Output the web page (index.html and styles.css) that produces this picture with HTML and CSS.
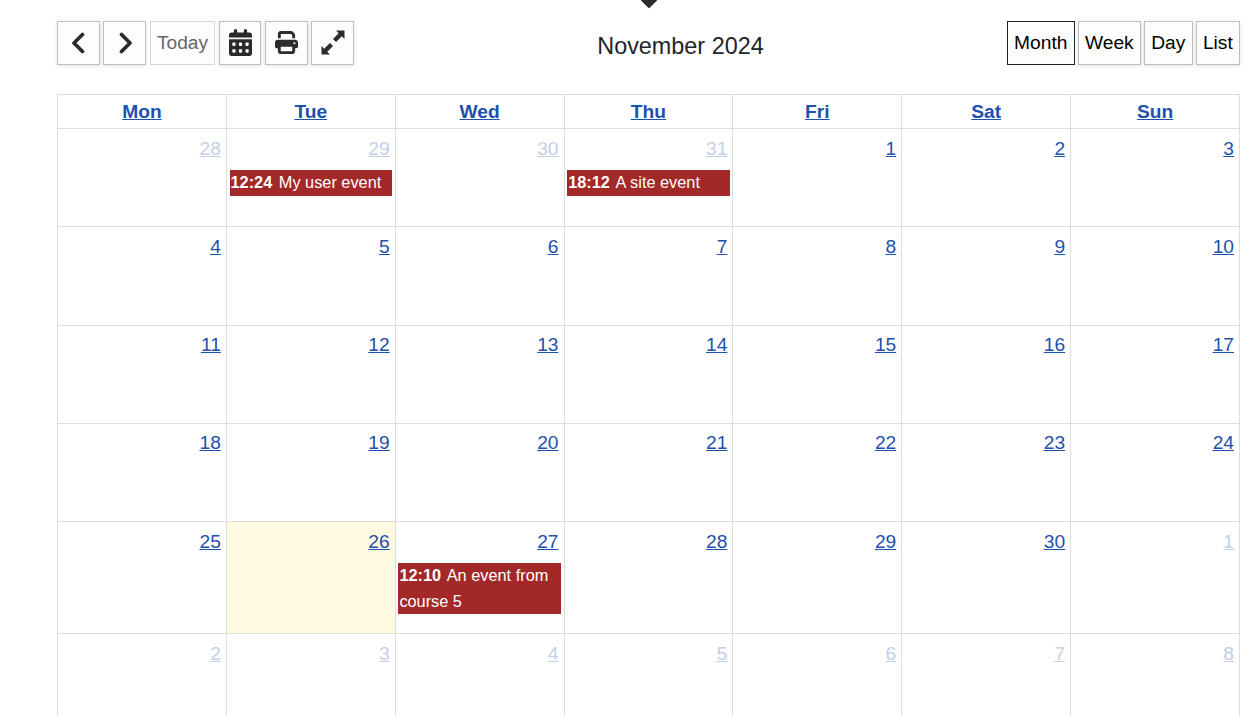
FILE: index.html
```html
<!DOCTYPE html>
<html lang="en">
<head>
<meta charset="utf-8">
<title>Calendar</title>
<link rel="stylesheet" href="styles.css">
</head>
<body>
<div class="caret"></div>
<main class="calendar">
  <header class="toolbar">
    <div class="group">
      <button class="btn icon"><svg class="chev prev" viewBox="0 0 14 22"><path d="M11.5 2.5 3 11l8.5 8.5"/></svg></button>
      <button class="btn icon"><svg class="chev next" viewBox="0 0 14 22"><path d="M2.5 2.5 11 11l-8.5 8.5"/></svg></button>
      <button class="btn today">Today</button>
      <button class="btn icon cal"><svg class="glyph calendar-glyph" viewBox="0 0 448 512" preserveAspectRatio="none"><path d="M128 0c17.7 0 32 14.3 32 32V64H288V32c0-17.7 14.3-32 32-32s32 14.3 32 32V64h48c26.5 0 48 21.5 48 48v48H0V112C0 85.5 21.5 64 48 64H96V32c0-17.7 14.3-32 32-32zM0 192H448V464c0 26.5-21.5 48-48 48H48c-26.5 0-48-21.5-48-48V192zm64 80v32c0 8.8 7.2 16 16 16h32c8.8 0 16-7.2 16-16V272c0-8.8-7.2-16-16-16H80c-8.8 0-16 7.2-16 16zm128 0v32c0 8.8 7.2 16 16 16h32c8.8 0 16-7.2 16-16V272c0-8.8-7.2-16-16-16H208c-8.8 0-16 7.2-16 16zm144-16c-8.8 0-16 7.2-16 16v32c0 8.8 7.2 16 16 16h32c8.8 0 16-7.2 16-16V272c0-8.8-7.2-16-16-16H336zM64 400v32c0 8.8 7.2 16 16 16h32c8.8 0 16-7.2 16-16V400c0-8.8-7.2-16-16-16H80c-8.8 0-16 7.2-16 16zm144-16c-8.8 0-16 7.2-16 16v32c0 8.8 7.2 16 16 16h32c8.8 0 16-7.2 16-16V400c0-8.8-7.2-16-16-16H208zm112 16v32c0 8.8 7.2 16 16 16h32c8.8 0 16-7.2 16-16V400c0-8.8-7.2-16-16-16H336c-8.8 0-16 7.2-16 16z"/></svg></button>
      <button class="btn icon print"><svg class="glyph square" viewBox="0 0 512 512"><path d="M128 0C92.7 0 64 28.7 64 64v96h64V64H354.7L384 93.3V160h64V93.3c0-17-6.7-33.3-18.7-45.3L400 18.7C388 6.7 371.7 0 354.7 0H128zM384 352v32 64H128V384 368 352H384zm64 32h32c17.7 0 32-14.3 32-32V256c0-35.3-28.7-64-64-64H64c-35.3 0-64 28.7-64 64v96c0 17.7 14.3 32 32 32H64v64c0 35.3 28.7 64 64 64H384c35.3 0 64-28.7 64-64V384zM432 248a24 24 0 1 1 0 48 24 24 0 1 1 0-48z"/></svg></button>
      <button class="btn icon"><svg class="glyph expand" viewBox="0 0 24 25"><path d="M15 .5h8.5V9l-2.7-2.7L15 12l-3-3 5.7-5.8zM9 24.5H.5V16l2.7 2.7L9 13l3 3-5.7 5.8z"/></svg></button>
    </div>
    <h2 class="title">November 2024</h2>
    <div class="group views">
      <button class="btn view active">Month</button>
      <button class="btn view">Week</button>
      <button class="btn view">Day</button>
      <button class="btn view">List</button>
    </div>
  </header>
  <table class="grid">
    <thead>
      <tr><th><a href="#">Mon</a></th><th><a href="#">Tue</a></th><th><a href="#">Wed</a></th><th><a href="#">Thu</a></th><th><a href="#">Fri</a></th><th><a href="#">Sat</a></th><th><a href="#">Sun</a></th></tr>
    </thead>
    <tbody>
      <tr>
        <td><a class="day muted" href="#">28</a></td>
        <td><a class="day muted" href="#">29</a><div class="event"><b>12:24</b> My user event</div></td>
        <td><a class="day muted" href="#">30</a></td>
        <td><a class="day muted" href="#">31</a><div class="event"><b>18:12</b> A site event</div></td>
        <td><a class="day" href="#">1</a></td>
        <td><a class="day" href="#">2</a></td>
        <td><a class="day" href="#">3</a></td>
      </tr>
      <tr>
        <td><a class="day" href="#">4</a></td><td><a class="day" href="#">5</a></td><td><a class="day" href="#">6</a></td><td><a class="day" href="#">7</a></td><td><a class="day" href="#">8</a></td><td><a class="day" href="#">9</a></td><td><a class="day" href="#">10</a></td>
      </tr>
      <tr>
        <td><a class="day" href="#">11</a></td><td><a class="day" href="#">12</a></td><td><a class="day" href="#">13</a></td><td><a class="day" href="#">14</a></td><td><a class="day" href="#">15</a></td><td><a class="day" href="#">16</a></td><td><a class="day" href="#">17</a></td>
      </tr>
      <tr>
        <td><a class="day" href="#">18</a></td><td><a class="day" href="#">19</a></td><td><a class="day" href="#">20</a></td><td><a class="day" href="#">21</a></td><td><a class="day" href="#">22</a></td><td><a class="day" href="#">23</a></td><td><a class="day" href="#">24</a></td>
      </tr>
      <tr>
        <td><a class="day" href="#">25</a></td>
        <td class="today-cell"><a class="day" href="#">26</a></td>
        <td><a class="day" href="#">27</a><div class="event"><b>12:10</b> An event from course 5</div></td>
        <td><a class="day" href="#">28</a></td><td><a class="day" href="#">29</a></td><td><a class="day" href="#">30</a></td>
        <td><a class="day muted" href="#">1</a></td>
      </tr>
      <tr>
        <td><a class="day muted" href="#">2</a></td><td><a class="day muted" href="#">3</a></td><td><a class="day muted" href="#">4</a></td><td><a class="day muted" href="#">5</a></td><td><a class="day muted" href="#">6</a></td><td><a class="day muted" href="#">7</a></td><td><a class="day muted" href="#">8</a></td>
      </tr>
    </tbody>
  </table>
</main>
</body>
</html>
```
FILE: styles.css
```css
html, body {
  margin: 0;
  height: 100%;
  overflow: hidden;
  background: #fff;
}
body {
  font-family: "Liberation Sans", Arial, sans-serif;
  font-size: 19.2px;
  color: #212529;
}
.caret {
  position: absolute;
  left: 642.5px;
  top: -6px;
  width: 12px;
  height: 12px;
  background: #2b2b2b;
  transform: rotate(45deg);
  border-radius: 1px;
}
.calendar {
  padding: 21px 12px 0 57px;
}
.toolbar {
  display: flex;
  justify-content: space-between;
  align-items: flex-start;
  height: 44px;
  margin-bottom: 29px;
}
.group {
  display: flex;
  gap: 3px;
}
.views {
  gap: 3.2px;
}
.btn {
  box-sizing: border-box;
  height: 43.6px;
  padding: 0;
  background: #fdfdfd;
  border: 1px solid #bfbfbf;
  box-shadow: 0 1px 4px rgba(0, 0, 0, 0.12);
  font-family: inherit;
  font-size: 19.2px;
  color: #000;
  display: flex;
  align-items: center;
  justify-content: center;
}
.icon {
  width: 43px;
  color: #2b2b2b;
}
.today {
  width: 65px;
  margin: 0 1px;
  color: #666;
  border-color: #d6d6d6;
  box-shadow: none;
}
.cal {
  width: 42px;
}
.print {
  margin-left: 1px;
}
.chev {
  width: 14px;
  height: 22px;
  fill: none;
  stroke: #2b2b2b;
  stroke-width: 3.7;
  stroke-linecap: round;
  stroke-linejoin: round;
}
.prev {
  margin-right: 2px;
}
.next {
  margin-left: 2px;
}
.glyph {
  width: 24px;
  height: 27px;
  fill: #2b2b2b;
}
.calendar-glyph {
  width: 23px;
  margin-left: 1px;
}
.square {
  width: 23px;
  height: 23px;
}
.expand {
  height: 25px;
}
.title {
  margin: 0;
  font-size: 23.4px;
  font-weight: 400;
  line-height: 50px;
}
.view {
  padding: 0 6.2px;
}
.active {
  border-color: #1a2230;
  box-shadow: none;
}
.grid {
  width: 1183px;
  table-layout: fixed;
  border-collapse: collapse;
}
.grid th,
.grid td {
  border: 1px solid #ddd;
}
.grid th {
  height: 33px;
  padding: 0;
  text-align: center;
  font-size: 19.2px;
  font-weight: 700;
  line-height: 33px;
}
.grid td {
  height: 98.3px;
  padding: 5.5px 2px 0;
  vertical-align: top;
  text-align: right;
  box-sizing: border-box;
}
.grid a {
  color: #1e50ae;
}
.grid a.muted {
  color: #c3cfe8;
}
.day {
  display: inline-block;
  margin-right: 3px;
  line-height: 28px;
}
.today-cell {
  background: #fff9df;
}
.event {
  margin: 7.7px 0.6px 19px 0.7px;
  padding: 0 1px 0.6px;
  background: #a32828;
  color: #fff;
  font-size: 16.32px;
  line-height: 25.2px;
  text-align: left;
}
.event b {
  margin-right: 2px;
}
```
